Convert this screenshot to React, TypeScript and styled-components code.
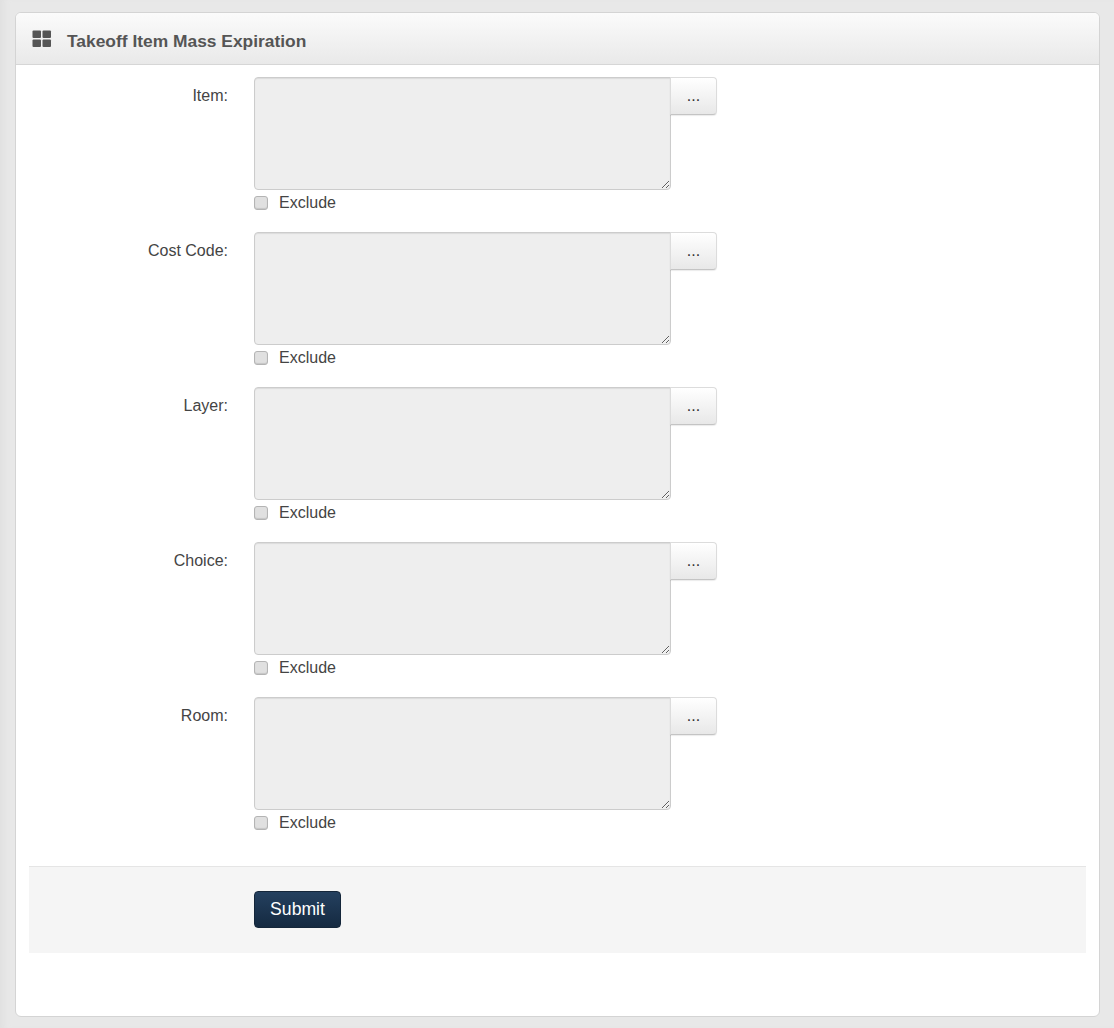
import styled, { createGlobalStyle } from 'styled-components';

const GlobalStyle = createGlobalStyle`
  html, body {
    margin: 0;
    padding: 0;
  }
  body {
    background: #e8e8e8;
    font-family: "Liberation Sans", Arial, sans-serif;
    color: #333;
  }
`;

const Page = styled.div`
  box-sizing: border-box;
  height: 1028px;
  padding: 12px 14px 11px 15px;
  box-shadow: inset 8px 0 6px -4px #e0e0e0;
`;

const Panel = styled.section`
  box-sizing: border-box;
  height: 1005px;
  display: flex;
  flex-direction: column;
  background: #fff;
  border: 1px solid #d4d4d4;
  border-radius: 6px;
  overflow: hidden;
`;

const PanelHeader = styled.header`
  box-sizing: border-box;
  height: 52px;
  flex: none;
  display: flex;
  align-items: center;
  gap: 15px;
  padding-left: 16px;
  background: linear-gradient(to bottom, #fbfbfb, #e9e9e9);
  border-bottom: 1px solid #d6d6d6;
`;

const Title = styled.h1`
  margin: 0;
  padding-top: 6px;
  font-size: 17.4px;
  font-weight: 700;
  color: #555;
`;

const Form = styled.form`
  display: flex;
  flex-direction: column;
  gap: 17px;
  padding: 12px 13px 0 13px;
`;

const FieldRow = styled.div`
  display: grid;
  grid-template-columns: 199px 1fr;
  column-gap: 26px;
`;

const FieldLabel = styled.label`
  text-align: right;
  font-size: 16px;
  line-height: 20px;
  padding-top: 9px;
  color: #444;
`;

const FieldBody = styled.div`
  display: flex;
  flex-direction: column;
`;

const InputLine = styled.div`
  display: flex;
  align-items: flex-start;
`;

const ListBox = styled.textarea`
  box-sizing: border-box;
  width: 417px;
  height: 113px;
  margin: 0;
  padding: 4px 6px;
  display: block;
  background: #eee;
  border: 1px solid #ccc;
  border-radius: 4px 0 4px 4px;
  box-shadow: inset 0 1px 1px rgba(0, 0, 0, 0.08);
  outline: none;
`;

const PickButton = styled.button`
  box-sizing: border-box;
  width: 47px;
  height: 38px;
  margin-left: -1px;
  padding: 0;
  font-family: inherit;
  font-size: 16px;
  color: #333;
  background: linear-gradient(to bottom, #fff, #e8e8e8);
  border: 1px solid #dcdcdc;
  border-bottom-color: #c4c4c4;
  border-radius: 0 4px 4px 0;
  box-shadow: 0 1px 1px rgba(0, 0, 0, 0.08);
`;

const ExcludeLine = styled.label`
  display: flex;
  align-items: center;
  gap: 11px;
  height: 25px;
  font-size: 16px;
  color: #444;
`;

const Check = styled.input`
  appearance: none;
  box-sizing: border-box;
  width: 14px;
  height: 14px;
  margin: 0;
  background: #e0e0e0;
  border: 1px solid #b4b4b4;
  border-radius: 3px;
  box-shadow: inset 0 -1px 1px rgba(0, 0, 0, 0.12);
`;

const Actions = styled.div`
  box-sizing: border-box;
  height: 87px;
  margin: 31px 13px 0 13px;
  padding: 24px 0 0 225px;
  background: #f5f5f5;
  border-top: 1px solid #e5e5e5;
`;

const SubmitButton = styled.button`
  box-sizing: border-box;
  display: block;
  width: 87px;
  height: 37px;
  padding: 0;
  font-family: inherit;
  font-size: 17.6px;
  color: #fff;
  background: linear-gradient(to bottom, #24405f, #152a41);
  border: 1px solid #14263a;
  border-radius: 4px;
`;

const fields = ['Item', 'Cost Code', 'Layer', 'Choice', 'Room'];

function GridIcon() {
  return (
    <svg width="20" height="18" viewBox="0 0 20 18" fill="#555">
      <rect x="0.5" y="0.5" width="8.5" height="7.5" rx="1" />
      <rect x="10.5" y="0.5" width="8.5" height="7.5" rx="1" />
      <rect x="0.5" y="9.5" width="8.5" height="7.5" rx="1" />
      <rect x="10.5" y="9.5" width="8.5" height="7.5" rx="1" />
    </svg>
  );
}

export default function App() {
  return (
    <>
      <GlobalStyle />
      <Page>
        <Panel>
          <PanelHeader>
            <GridIcon />
            <Title>Takeoff Item Mass Expiration</Title>
          </PanelHeader>
          <Form onSubmit={(e) => e.preventDefault()}>
            {fields.map((name) => (
              <FieldRow key={name}>
                <FieldLabel>{name}:</FieldLabel>
                <FieldBody>
                  <InputLine>
                    <ListBox readOnly />
                    <PickButton type="button">...</PickButton>
                  </InputLine>
                  <ExcludeLine>
                    <Check type="checkbox" />
                    Exclude
                  </ExcludeLine>
                </FieldBody>
              </FieldRow>
            ))}
          </Form>
          <Actions>
            <SubmitButton type="submit">Submit</SubmitButton>
          </Actions>
        </Panel>
      </Page>
    </>
  );
}
